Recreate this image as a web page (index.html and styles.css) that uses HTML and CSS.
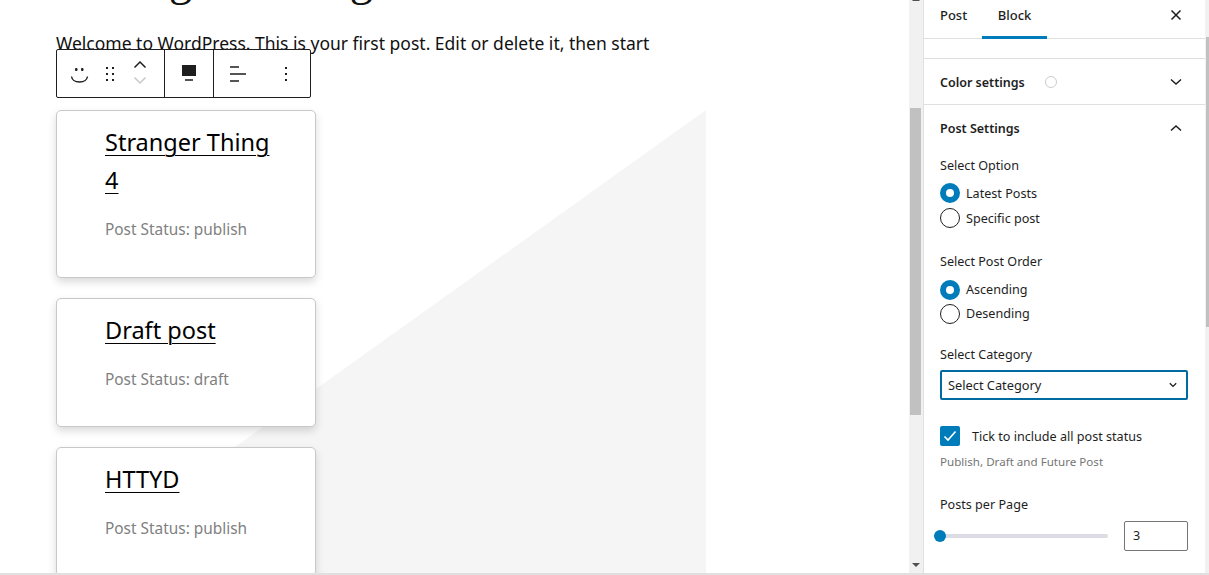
FILE: index.html
```html
<!DOCTYPE html>
<html lang="en">
<head>
    <meta charset="UTF-8">
    <title>Edit Post</title>
    <link rel="stylesheet" href="styles.css">
</head>
<body>
    <div id="editor">
        <div id="content">
            <h1 class="post-title">Testing this Blog</h1>
            <p class="intro">Welcome to WordPress. This is your first post. Edit or delete it, then start</p>

            <div class="toolbar-wrap">
                <div class="toolbar">
                    <div class="tool-group group-main">
                        <svg class="ico-smile" width="24" height="24" viewBox="0 0 24 24">
                            <rect x="7" y="6" width="2.500" height="3" rx="1" fill="#1e1e1e"/>
                            <rect x="13" y="6" width="2.500" height="3" rx="1" fill="#1e1e1e"/>
                            <path d="M3.500 14.500c.6 3.500 4 5.500 8 5.500s7.400-2 8-5.500" fill="none" stroke="#1e1e1e" stroke-width="1.400"/>
                        </svg>
                        <svg class="ico-drag" width="12" height="16" viewBox="0 0 12 16">
                            <path d="M1 1h2v2H1zM7 1h2v2H7zM1 7h2v2H1zM7 7h2v2H7zM1 13h2v2H1zM7 13h2v2H7z" fill="#1e1e1e"/>
                        </svg>
                        <div class="movers">
                            <svg width="14" height="9" viewBox="0 0 14 9"><path d="M1.500 7.500 7 2l5.500 5.500" fill="none" stroke="#1e1e1e" stroke-width="1.500"/></svg>
                            <svg width="14" height="9" viewBox="0 0 14 9"><path d="M1.500 1.500 7 7l5.500-5.500" fill="none" stroke="#c8c8c8" stroke-width="1.500"/></svg>
                        </div>
                    </div>
                    <div class="tool-group group-block">
                        <svg width="16" height="18" viewBox="0 0 16 18">
                            <rect x="1" y="0" width="14" height="11" fill="#1e1e1e"/>
                            <rect x="4" y="14" width="8" height="2" fill="#555"/>
                        </svg>
                    </div>
                    <div class="tool-group group-align">
                        <svg width="18" height="16" viewBox="0 0 18 16">
                            <rect x="1" y="0" width="9" height="2" fill="#555"/>
                            <rect x="1" y="7" width="16" height="2" fill="#555"/>
                            <rect x="1" y="14" width="9" height="2" fill="#555"/>
                        </svg>
                        <svg width="4" height="14" viewBox="0 0 4 14">
                            <path d="M1 0h2v2H1zM1 6h2v2H1zM1 12h2v2H1z" fill="#1e1e1e"/>
                        </svg>
                    </div>
                </div>
            </div>

            <div class="post-grid">
                <div class="post-card card-tall">
                    <a class="post-name" href="#">Stranger Thing 4</a>
                    <p class="post-status">Post Status: publish</p>
                </div>
                <div class="post-card">
                    <a class="post-name" href="#">Draft post</a>
                    <p class="post-status">Post Status: draft</p>
                </div>
                <div class="post-card">
                    <a class="post-name" href="#">HTTYD</a>
                    <p class="post-status">Post Status: publish</p>
                </div>
            </div>
        </div>
        <div class="scrollbar main-scroll">
            <span class="arrow-up"></span>
            <div class="thumb"></div>
            <span class="arrow-down"></span>
        </div>
    </div>

    <div id="sidebar">
        <div class="tabs">
            <span class="tab">Post</span>
            <span class="tab tab-active">Block</span>
            <svg class="close" width="12" height="12" viewBox="0 0 12 12"><path d="M1.500 1.500l9 9M10.500 1.500l-9 9" stroke="#1e1e1e" stroke-width="1.500"/></svg>
        </div>

        <div class="panel-gap"></div>

        <div class="panel panel-color">
            <span class="panel-title">Color settings</span>
            <span class="color-dot"></span>
            <svg class="chev" width="12" height="8" viewBox="0 0 12 8"><path d="M1 1.500l5 4.500 5-4.500" fill="none" stroke="#1e1e1e" stroke-width="1.500"/></svg>
        </div>

        <div class="panel-body">
            <div class="panel-head">
                <span class="panel-title">Post Settings</span>
                <svg class="chev chev-up" width="12" height="8" viewBox="0 0 12 8"><path d="M1 6.500l5-4.500 5 4.500" fill="none" stroke="#1e1e1e" stroke-width="1.500"/></svg>
            </div>

            <div class="field field-option">
                <div class="field-label">Select Option</div>
                <div class="radio-row"><span class="radio radio-on"></span>Latest Posts</div>
                <div class="radio-row"><span class="radio"></span>Specific post</div>
            </div>

            <div class="field field-order">
                <div class="field-label">Select Post Order</div>
                <div class="radio-row"><span class="radio radio-on"></span>Ascending</div>
                <div class="radio-row"><span class="radio"></span>Desending</div>
            </div>

            <div class="field field-cat">
                <div class="field-label">Select Category</div>
                <div class="select">
                    Select Category
                    <svg width="8" height="6" viewBox="0 0 8 6"><path d="M.8 1.200 4 4.400l3.200-3.200" fill="none" stroke="#1e1e1e" stroke-width="1.300"/></svg>
                </div>
            </div>

            <div class="check-row">
                <span class="checkbox">
                    <svg width="14" height="12" viewBox="0 0 14 12"><path d="M1.500 6.500l3.500 3.500 7.500-8.500" fill="none" stroke="#fff" stroke-width="1.600"/></svg>
                </span>
                Tick to include all post status
            </div>
            <div class="help">Publish, Draft and Future Post</div>

            <div class="field-label label-range">Posts per Page</div>
            <div class="range-row">
                <div class="range"><span class="range-thumb"></span></div>
                <div class="num-input">3</div>
            </div>
        </div>
        <div class="scrollbar side-scroll"><div class="thumb"></div></div>
    </div>
</body>
</html>
```
FILE: styles.css
```css
html, body {
    height: 100%;
    margin: 0;
}

body {
    font-family: "Noto Sans", sans-serif;
    display: flex;
    height: 575px;
    overflow: hidden;
    background: #fff;
    color: #1e1e1e;
    box-sizing: border-box;
    border-bottom: 2px solid #e0e0e0;
}

#editor {
    width: 924px;
    display: flex;
    flex: none;
    border-right: 1px solid #e0e0e0;
    box-sizing: border-box;
}

#content {
    flex: 1;
    overflow: hidden;
    padding-left: 56px;
    min-width: 0;
}

.post-title {
    font-family: "Liberation Serif", serif;
    font-weight: 400;
    font-size: 46.5px;
    line-height: 50px;
    margin: -45px 0 0;
    color: #111;
    white-space: nowrap;
}

.intro {
    margin: 24px 0 0;
    font-size: 17.5px;
    line-height: 28px;
    height: 28px;
    color: #111;
    white-space: nowrap;
}

.toolbar-wrap {
    height: 0;
    position: relative;
    z-index: 2;
}

.toolbar {
    position: absolute;
    left: 0;
    top: -8px;
    display: flex;
    width: 255px;
    height: 49px;
    border: 1px solid #1e1e1e;
    border-radius: 2px;
    background: #fff;
    box-sizing: border-box;
}

.tool-group {
    display: flex;
    align-items: center;
    border-right: 1px solid #1e1e1e;
    box-sizing: border-box;
}

.group-main {
    width: 108px;
    padding-left: 11px;
}

.ico-drag {
    margin-left: 13px;
}

.movers {
    margin-left: 15.5px;
    margin-bottom: 3px;
    display: flex;
    flex-direction: column;
    gap: 7px;
}

.movers svg {
    display: block;
}

.group-block {
    width: 49px;
    justify-content: center;
}

.group-align {
    border-right: 0;
    flex: 1;
    padding-left: 15px;
    gap: 36.5px;
}

.post-grid {
    width: 650px;
    margin-top: 53px;
    position: relative;
    display: flex;
    flex-direction: column;
    gap: 20px;
}

.post-grid::before {
    content: "";
    position: absolute;
    left: 0;
    top: 0;
    width: 650px;
    height: 465px;
    background: #f5f5f5;
    clip-path: polygon(100% 0, 100% 100%, 0 100%);
}

.post-card {
    position: relative;
    width: 260px;
    height: 129px;
    flex: none;
    box-sizing: border-box;
    background: #fff;
    border: 1px solid #c8c8c8;
    border-radius: 5px;
    box-shadow: 0 4px 8px rgba(0,0,0,0.15);
    padding: 12px 40px 0 48px;
}

.card-tall {
    height: 168px;
}

.post-name {
    font-size: 23.5px;
    line-height: 38px;
    color: #000;
    text-decoration: underline;
    text-decoration-thickness: 1px;
    text-underline-offset: 4px;
}

.post-status {
    margin: 19px 0 0;
    font-size: 15.4px;
    line-height: 24px;
    color: #808080;
}

.scrollbar {
    flex: none;
    background: #f1f1f1;
    position: relative;
}

.main-scroll {
    width: 14px;
}

.main-scroll .thumb {
    position: absolute;
    left: 1px;
    top: 108px;
    width: 11px;
    height: 307px;
    background: #c1c1c1;
}

.arrow-up, .arrow-down {
    position: absolute;
    left: 3px;
    width: 0;
    height: 0;
    border-left: 4px solid transparent;
    border-right: 4px solid transparent;
}

.arrow-up {
    top: -3px;
    border-bottom: 4px solid #505050;
}

.arrow-down {
    bottom: 6px;
    border-top: 4px solid #505050;
}

#sidebar {
    flex: 1;
    position: relative;
    min-width: 0;
    font-size: 12.6px;
    padding-right: 4px;
}

.tabs {
    height: 39px;
    display: flex;
    align-items: stretch;
    border-bottom: 1px solid #e0e0e0;
    box-sizing: border-box;
    padding-left: 16px;
    position: relative;
    line-height: 31px;
    font-size: 13px;
    font-weight: 500;
}

.tab {
    width: 42px;
}

.tab-active {
    width: 65px;
    text-align: center;
    border-bottom: 3px solid #007cba;
    margin-bottom: -1px;
}

.close {
    margin-left: auto;
    margin-right: 23px;
    margin-top: 9px;
}

.panel-gap {
    height: 19px;
    border-bottom: 1px solid #e0e0e0;
}

.panel {
    height: 44px;
    border-bottom: 1px solid #e0e0e0;
    display: flex;
    align-items: center;
    padding: 1px 23px 0 16px;
}

.panel-title {
    font-weight: 600;
    font-size: 12.5px;
}

.color-dot {
    width: 10px;
    height: 10px;
    border: 1px solid #ccc;
    border-radius: 50%;
    margin-left: 20px;
}

.chev {
    margin-left: auto;
}

.chev-up {
    margin-bottom: 2px;
}

.panel-body {
    padding: 0 17px 0 16px;
}

.panel-head {
    height: 47px;
    display: flex;
    align-items: center;
    padding-right: 6px;
}

.field-label {
    line-height: 18px;
    margin-bottom: 8px;
}

.radio-row {
    display: flex;
    align-items: center;
    gap: 6px;
    height: 20px;
    margin-top: 5px;
}

.field-order .field-label {
    margin-bottom: 9px;
}

.field-order .radio-row + .radio-row {
    margin-top: 4px;
}

.radio {
    width: 20px;
    height: 20px;
    box-sizing: border-box;
    border: 1px solid #1e1e1e;
    border-radius: 50%;
    background: #fff;
}

.radio-on {
    border: 6px solid #007cba;
}

.field-option {
    margin-top: 5px;
}

.field-order {
    margin-top: 24.5px;
}

.field-cat {
    margin-top: 22.5px;
}

.field-cat .field-label {
    margin-bottom: 0;
}

.select {
    margin-top: 6px;
    height: 30px;
    width: 248px;
    box-sizing: border-box;
    border: 2px solid #006ba1;
    border-radius: 2px;
    padding: 0 9px 0 6px;
    display: flex;
    align-items: center;
    justify-content: space-between;
    font-size: 12.8px;
}

.check-row {
    margin-top: 26px;
    display: flex;
    align-items: center;
    gap: 12px;
    height: 20px;
}

.checkbox {
    width: 20px;
    height: 20px;
    background: #007cba;
    border-radius: 2px;
    display: flex;
    align-items: center;
    justify-content: center;
}

.help {
    margin-top: 7px;
    font-size: 11.6px;
    line-height: 18px;
    color: #757575;
}

.label-range {
    margin-top: 25px;
    margin-bottom: 0;
}

.range-row {
    display: flex;
    align-items: center;
    justify-content: space-between;
    margin-top: 7px;
    width: 248px;
}

.range {
    width: 168px;
    height: 4px;
    border-radius: 2px;
    background: #dcdce4;
    position: relative;
}

.range-thumb {
    position: absolute;
    left: -6px;
    top: -4px;
    width: 12px;
    height: 12px;
    border-radius: 50%;
    background: #007cba;
}

.num-input {
    width: 64px;
    height: 30px;
    box-sizing: border-box;
    border: 1px solid #757575;
    border-radius: 2px;
    padding-left: 8px;
    line-height: 28px;
}

.side-scroll {
    position: absolute;
    right: 0;
    top: 0;
    bottom: 0;
    width: 4px;
}

.side-scroll .thumb {
    position: absolute;
    left: 1px;
    top: 37px;
    width: 3px;
    height: 290px;
    background: #c1c1c1;
}
```
